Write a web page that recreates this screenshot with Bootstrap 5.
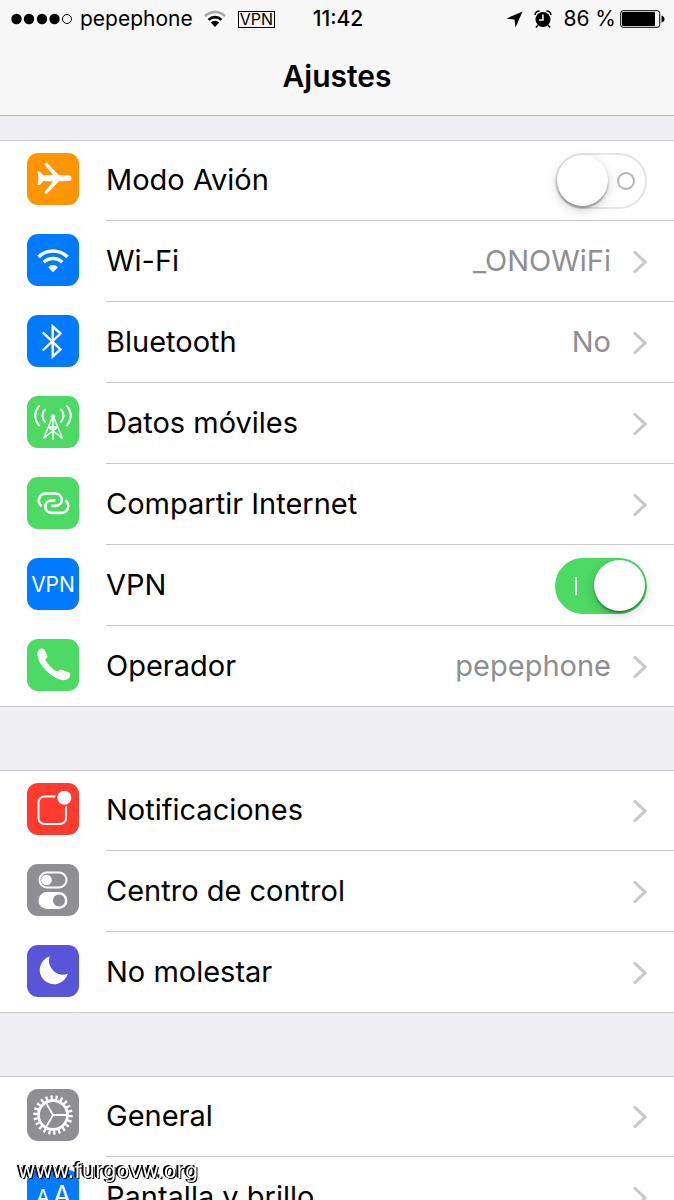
<!DOCTYPE html>
<html lang="es">
<head>
<meta charset="utf-8">
<meta name="viewport" content="width=device-width, initial-scale=1">
<title>Ajustes</title>
<link href="https://cdn.jsdelivr.net/npm/bootstrap@5.3.0/dist/css/bootstrap.min.css" rel="stylesheet">
<style>
  body { font-family: Inter, "Liberation Sans", sans-serif; background: #efeff4; color: #000; }
  .screen { height: 100vh; overflow: hidden; }
  .topbar { background: #f7f7f7; border-bottom: 1px solid #b2b2b2; height: 116px; }
  .statusbar { display: grid; grid-template-columns: 1fr auto 1fr; height: 38px; padding: 0 9px 0 11px; font-size: 21px; line-height: 28px; }
  .clock { font-weight: 500; }
  .vpn-tag { border: 1px solid #000; font-size: 16px; line-height: 15px; padding: 0 1px; margin-left: 10px; }
  .title { font-size: 30px; font-weight: 600; line-height: 36px; margin: 20px 0 0; }
  .settings { padding-top: 24px; gap: 63px; }
  .group { background: #fff; border: solid #c8c7cc; border-width: 1px 0; border-radius: 0; }
  .entry { display: flex; align-items: flex-start; padding: 0 0 0 27px; color: #000; text-decoration: none; font-size: 29px; line-height: 40px; }
  .entry:first-child { margin-top: -1px; }
  .entry > svg { width: 52px; height: 52px; border-radius: 11px; margin-top: 13px; flex: none; }
  .entry-body { height: 81px; margin-left: 27px; padding: 13px 27px 11px 0; border-bottom: 1px solid #c8c7cc; min-width: 0; }
  .entry:last-child .entry-body { border-bottom: 0; height: 80px; }
  .name, .detail { padding-bottom: 2px; }
  .detail { color: #8e8e93; }
  .chevron { width: 15px; height: 26px; margin-left: 21px; flex: none; }
  .orange { background: #ff9500; }
  .blue { background: #007aff; }
  .green { background: #4cd964; }
  .red { background: #ff3b30; }
  .gray { background: #8e8e93; }
  .violet { background: #5856d6; }
  .toggle { appearance: none; position: relative; width: 92px; height: 56px; margin: 0; border: 2px solid #e5e5e5; border-radius: 28px; background: #fff; flex: none; }
  .toggle::before { content: ""; position: absolute; left: 0; top: 0; width: 51px; height: 51px; border-radius: 50%; background: #fff; box-shadow: 0 2px 2px rgba(0,0,0,.35), 0 4px 12px rgba(0,0,0,.18); }
  .toggle::after { content: ""; position: absolute; right: 10px; top: 17px; width: 18px; height: 18px; border: 2px solid #b4b4b4; border-radius: 50%; }
  .toggle:checked { background: #4cd964; border-color: #4cd964; }
  .toggle:checked::before { left: 37px; }
  .toggle:checked::after { right: auto; left: 18px; width: 2px; border: 0; border-radius: 0; background: #fff; }
  .watermark { position: fixed; left: 18px; bottom: 17px; font: 21px/24px "DejaVu Sans", sans-serif; color: #fff; text-shadow: -1px 0 #000, -2px -1px #000, 1px 1px #000; }
</style>
</head>
<body>
<svg class="d-none" aria-hidden="true">
  <symbol id="chev" viewBox="0 0 15 26"><path d="M2 2.500 13 13 2 23.500" fill="none" stroke="#c7c7cc" stroke-width="3"/></symbol>
</svg>
<div class="screen">
  <header class="topbar">
    <div class="statusbar align-items-center">
      <div class="d-flex align-items-center">
        <svg width="61" height="12" viewBox="0 0 61 12"><circle cx="5.500" cy="6" r="5.200"/><circle cx="18" cy="6" r="5.200"/><circle cx="31" cy="6" r="5.200"/><circle cx="43.500" cy="6" r="5.200"/><circle cx="56" cy="6" r="4.500" fill="none" stroke="#000"/></svg>
        <span class="ms-2">pepephone</span>
        <svg style="margin-left:9px" width="26" height="18" viewBox="0 0 26 18" fill="none"><path d="M3 6.200A14 14 0 0 1 23 6.200" stroke="#aaa" stroke-width="2.600"/><path d="M6.600 9.800A9 9 0 0 1 19.400 9.800" stroke="#000" stroke-width="2.600"/><path d="M8.800 12.400A6 6 0 0 1 17.200 12.400L13 17z" fill="#000"/></svg>
        <span class="vpn-tag">VPN</span>
      </div>
      <div class="clock">11:42</div>
      <div class="d-flex align-items-center justify-content-end">
        <svg width="17" height="17" viewBox="0 0 17 17"><path d="M16.500.5 9.500 16.500 8.500 8.500.5 7.500z"/></svg>
        <svg class="ms-2" width="24" height="20" viewBox="0 0 24 20"><circle cx="12" cy="10.500" r="7.500"/><path d="M4 6Q4.500 2 8.500 2M20 6Q19.500 2 15.500 2M7 16l-2 2.500M17 16l2 2.500" fill="none" stroke="#000" stroke-width="1.500"/><path d="M12 5.500V11H8" fill="none" stroke="#f7f7f7" stroke-width="1.500"/></svg>
        <span class="ms-2">86 %</span>
        <svg class="ms-1" width="45" height="18" viewBox="0 0 45 18"><rect x=".7" y=".7" width="39" height="16.600" rx="2.500" fill="none" stroke="#000"/><rect x="2" y="2" width="33" height="14" rx="1"/><path d="M41.500 5.500q3 1 3 3.500t-3 3.500z"/></svg>
      </div>
    </div>
    <h1 class="title text-center">Ajustes</h1>
  </header>

  <main class="settings d-flex flex-column">
    <div class="group list-group">
      <div class="entry">
        <svg class="orange" viewBox="0 0 52 52"><path fill="#fff" d="M10.500 18.500h2.200l3.800 4 9.500-.7L17.300 11.500q0-2.200 2.600-1.700L32 22.200l9.500.1q3 .6 3 2.900t-3 2.900L32 28.200 19.900 40.700q-2.600.6-2.600-1.500L26 28.600l-9.500-.7-3.800 4h-2.200l1-6.700z"/></svg>
        <div class="entry-body d-flex align-items-center flex-grow-1">
          <label for="airplane" class="name flex-grow-1">Modo Avión</label>
          <input id="airplane" class="toggle" type="checkbox" role="switch">
        </div>
      </div>
      <a class="entry" href="#wifi">
        <svg class="blue" viewBox="0 0 52 52" fill="none" stroke="#fff" stroke-width="3.400"><path d="M11.500 23A20.500 20.500 0 0 1 40.500 23M16.800 28.300A13 13 0 0 1 35.200 28.300"/><path fill="#fff" stroke="none" d="M21 33.200A7 7 0 0 1 31 33.200L26 38.300z"/></svg>
        <span class="entry-body d-flex align-items-center flex-grow-1"><span class="name flex-grow-1">Wi-Fi</span><span class="detail">_ONOWiFi</span><svg class="chevron"><use href="#chev"/></svg></span>
      </a>
      <a class="entry" href="#bluetooth">
        <svg class="blue" viewBox="0 0 52 52" fill="none" stroke="#fff" stroke-width="2.400"><path d="M15.700 17.300 33.500 34.500 25.700 41.500V11.500L33.500 18.500 15.700 35.500"/></svg>
        <span class="entry-body d-flex align-items-center flex-grow-1"><span class="name flex-grow-1">Bluetooth</span><span class="detail">No</span><svg class="chevron"><use href="#chev"/></svg></span>
      </a>
      <a class="entry" href="#datos">
        <svg class="green" viewBox="0 0 52 52" fill="none" stroke="#fff" stroke-width="1.500"><circle cx="26" cy="20.500" r="2.200" fill="#fff" stroke="none"/><path d="M26 20v24M25.500 21 16.500 42.500M26.500 21 35.500 42.500M21.500 31h9M16.500 42.500 30.500 31M35.500 42.500 21.500 31"/><path stroke-width="2" d="M12.500 9.500Q4 19.500 12.500 30M18.500 13Q12.500 19.500 18.500 26.500M39.500 9.500Q48 19.500 39.500 30M33.500 13Q39.500 19.500 33.500 26.500"/></svg>
        <span class="entry-body d-flex align-items-center flex-grow-1"><span class="name flex-grow-1">Datos móviles</span><svg class="chevron"><use href="#chev"/></svg></span>
      </a>
      <a class="entry" href="#compartir">
        <svg class="green" viewBox="0 0 52 52" fill="none" stroke="#fff" stroke-width="2.600"><path d="M14.500 29.200C9 24 12.500 16.500 19 16.500H28C37 16.500 37 28.900 28 28.900H24.500M38.500 23.200C44 28.400 40.500 35.900 34 35.900H25C16 35.900 16 23.500 25 23.500H28.500"/></svg>
        <span class="entry-body d-flex align-items-center flex-grow-1"><span class="name flex-grow-1">Compartir Internet</span><svg class="chevron"><use href="#chev"/></svg></span>
      </a>
      <div class="entry">
        <svg class="blue" viewBox="0 0 52 52"><text x="26" y="34" text-anchor="middle" font-size="21" fill="#fff">VPN</text></svg>
        <div class="entry-body d-flex align-items-center flex-grow-1">
          <label for="vpn" class="name flex-grow-1">VPN</label>
          <input id="vpn" class="toggle" type="checkbox" role="switch" checked>
        </div>
      </div>
      <a class="entry" href="#operador">
        <svg class="green" viewBox="0 0 52 52"><path fill="#fff" d="M12 10.500c2-1.800 5-1.300 6 1l2.200 4.700c.7 1.900-.4 3-2 4.300 2.800 5.200 7 9.500 12.200 12.200 1.500-1.800 3-2.500 5-1.700l6.300 2.300c2 .9 2 3 1 4.700-2 3.300-6 4-10 2.600C22 36.500 12 26 10.500 17c-.4-3 .2-5.200 1.500-6.500z"/></svg>
        <span class="entry-body d-flex align-items-center flex-grow-1"><span class="name flex-grow-1">Operador</span><span class="detail">pepephone</span><svg class="chevron"><use href="#chev"/></svg></span>
      </a>
    </div>

    <div class="group list-group">
      <a class="entry" href="#notificaciones">
        <svg class="red" viewBox="0 0 52 52"><rect x="11.500" y="13.500" width="27.500" height="27.500" rx="6" fill="none" stroke="#fff" stroke-width="2"/><circle cx="37.300" cy="14.800" r="9.200" fill="#ff3b30"/><circle cx="37.300" cy="14.800" r="7" fill="#fff"/></svg>
        <span class="entry-body d-flex align-items-center flex-grow-1"><span class="name flex-grow-1">Notificaciones</span><svg class="chevron"><use href="#chev"/></svg></span>
      </a>
      <a class="entry" href="#centro">
        <svg class="gray" viewBox="0 0 52 52"><rect x="12.500" y="8.500" width="27" height="15" rx="7.500" fill="none" stroke="#fff" stroke-width="2"/><circle cx="19.500" cy="16" r="5.300" fill="#fff"/><rect x="11.500" y="28" width="29" height="17" rx="8.500" fill="#fff"/><circle cx="32" cy="36.500" r="6" fill="#8e8e93"/></svg>
        <span class="entry-body d-flex align-items-center flex-grow-1"><span class="name flex-grow-1">Centro de control</span><svg class="chevron"><use href="#chev"/></svg></span>
      </a>
      <a class="entry" href="#molestar">
        <svg class="violet" viewBox="0 0 52 52"><path fill="#fff" d="M22.800 11.300A14.300 14.300 0 1 0 40.800 28.800A14 14 0 0 1 22.800 11.300z"/></svg>
        <span class="entry-body d-flex align-items-center flex-grow-1"><span class="name flex-grow-1">No molestar</span><svg class="chevron"><use href="#chev"/></svg></span>
      </a>
    </div>

    <div class="group list-group">
      <a class="entry" href="#general">
        <svg class="gray" viewBox="0 0 52 52" fill="none" stroke="#fff"><circle cx="26" cy="26" r="14.500" stroke-width="2.800"/><circle cx="26" cy="26" r="17.500" stroke-width="4.400" pathLength="44" stroke-dasharray=".9 1.1"/><path stroke-width="1.800" d="M26 26H40M26 26 19 13.900M26 26 19 38.100"/></svg>
        <span class="entry-body d-flex align-items-center flex-grow-1"><span class="name flex-grow-1">General</span><svg class="chevron"><use href="#chev"/></svg></span>
      </a>
      <a class="entry" href="#pantalla">
        <svg class="blue" viewBox="0 0 52 52" fill="#fff"><text x="9" y="34" font-size="20">A</text><text x="26" y="34" font-size="26">A</text></svg>
        <span class="entry-body d-flex align-items-center flex-grow-1"><span class="name flex-grow-1">Pantalla y brillo</span><svg class="chevron"><use href="#chev"/></svg></span>
      </a>
    </div>
  </main>
</div>
<div class="watermark">www.furgovw.org</div>
<script src="https://cdn.jsdelivr.net/npm/bootstrap@5.3.0/dist/js/bootstrap.bundle.min.js"></script>
</body>
</html>
